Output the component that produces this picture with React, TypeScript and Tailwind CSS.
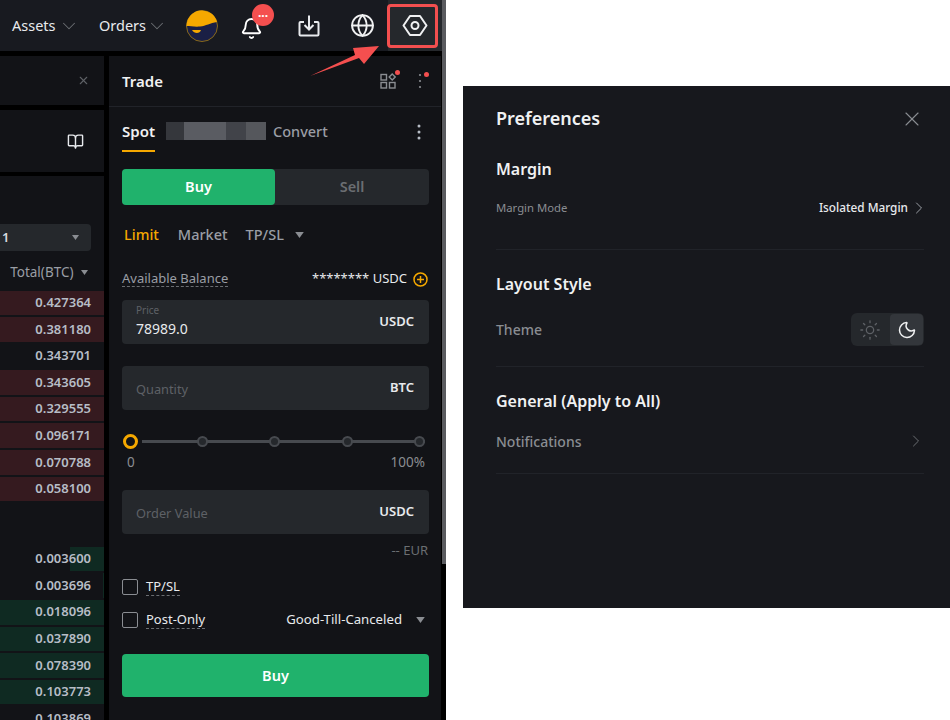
import { Bell, ChevronDown, ChevronRight, Globe, Moon, Sun, X, BookOpen } from 'lucide-react';

const asks: [string, boolean][] = [
  ['0.427364', true], ['0.381180', true], ['0.343701', false], ['0.343605', true],
  ['0.329555', true], ['0.096171', true], ['0.070788', true], ['0.058100', true],
];

const bids: [string, number][] = [
  ['0.003600', 34], ['0.003696', 1], ['0.018096', 104], ['0.037890', 104],
  ['0.078390', 104], ['0.103773', 104], ['0.103869', 0],
];

const font = { fontFamily: '"Noto Sans", "Liberation Sans", sans-serif' };

function Caret({ className = '' }: { className?: string }) {
  return (
    <svg viewBox="0 0 10 7" className={className}>
      <path d="M0 0h10L5 7z" fill="currentColor" />
    </svg>
  );
}

function Kebab({ r = 1.5 }: { r?: number }) {
  return (
    <svg width="6" height="16" viewBox="0 0 6 16" fill="currentColor">
      <circle cx="3" cy="2" r={r} />
      <circle cx="3" cy="8" r={r} />
      <circle cx="3" cy="14" r={r} />
    </svg>
  );
}

function Field({ label, unit }: { label: string; unit: string }) {
  return (
    <div className="flex h-[44px] w-[307px] items-center justify-between rounded bg-[#25282c] pl-[14px] pr-[15px]">
      <span className="pt-[3px] text-[12.8px] text-[#5e6166]">{label}</span>
      <span className="text-[13px] font-semibold text-[#e8eaed]">{unit}</span>
    </div>
  );
}

function SliderDot() {
  return <span className="h-[11px] w-[11px] rounded-full border-2 border-[#474a4f] bg-[#25282c]" />;
}

function TopBar() {
  return (
    <div className="relative flex h-[51px] items-center bg-[#181a20] pl-[12px] text-[14.5px] text-[#e8eaed]">
      <span className="w-[46px]">Assets</span>
      <ChevronDown size={22} strokeWidth={1.1} className="text-[#6b6e72]" />
      <span className="ml-[19px] w-[47px]">Orders</span>
      <ChevronDown size={22} strokeWidth={1.1} className="text-[#6b6e72]" />
      {/* avatar */}
      <svg width="32" height="32" viewBox="0 0 32 32" className="ml-[18px] shrink-0">
        <circle cx="16" cy="16" r="15.5" fill="#1a1f45" stroke="#8a6a1a" />
        <path d="M.5 16A15.500 15.500 0 0 1 31 12C24 13 20 16 14 16.500 9 17 4 16 .5 16z" fill="#f5a800" />
        <path d="M6 20h9c-1 4-7 4-9 0z" fill="#f5a800" />
      </svg>
      <Bell size={23} strokeWidth={2} className="ml-[22px] mt-[5px] text-white" />
      <svg width="24" height="24" viewBox="0 0 24 24" fill="none" stroke="#e8eaed" strokeWidth="2" className="ml-[34px]">
        <path d="M7 8H3.500a1 1 0 0 0-1 1v11.500a1 1 0 0 0 1 1h17a1 1 0 0 0 1-1V9a1 1 0 0 0-1-1H17" />
        <path d="M12 1.500V15M7.500 11l4.500 4.500 4.500-4.500" />
      </svg>
      <Globe size={25} strokeWidth={1.8} className="ml-[29px] text-[#f0f1f2]" />
      {/* selected settings button */}
      <div className="ml-[13px] flex h-[51px] w-[54px] shrink-0 items-center justify-center bg-[#25282c]">
        <svg width="26" height="21" viewBox="0 0 26 21" fill="none" stroke="#f0f1f2" strokeWidth="2">
          <path d="M8 1h10l6.500 9.500L18 20H8L1.500 10.500z" strokeLinejoin="round" />
          <circle cx="13" cy="10.500" r="3.500" />
        </svg>
      </div>
      <span className="absolute left-[252px] top-[4px] flex h-[22px] w-[22px] items-center justify-center rounded-full bg-[#f44f4f] text-[12px] font-bold leading-none text-white">
        <span className="mb-[5px]">...</span>
      </span>
    </div>
  );
}

function OrderBook() {
  return (
    <div className="flex w-[104px] flex-col">
      <div className="flex h-[49px] items-center justify-end bg-[#121317] pr-[14px]">
        <X size={13} className="text-[#5e6166]" />
      </div>
      <div className="mt-[5px] flex h-[62px] items-center justify-end bg-[#121317] pr-[20px]">
        <BookOpen size={17} strokeWidth={2} className="text-[#e8eaed]" />
      </div>
      <div className="mt-[4px] h-[544px] overflow-hidden bg-[#121317] text-[13px] font-semibold text-[#b7bdc6]">
        <div className="mt-[48px] flex h-[27px] w-[91px] items-center justify-between rounded-r bg-[#25282c] pl-[2px] pr-[12.5px]">
          <span className="text-[13px] text-[#d8dade]">1</span>
          <Caret className="h-[5px] w-[7px] text-[#8a8d92]" />
        </div>
        <div className="mt-[12px] flex h-[18px] items-center justify-end pr-[16.5px] text-[13.5px] font-normal text-[#9a9ea5]">
          Total(BTC)
          <Caret className="ml-[7px] h-[5px] w-[7px] text-[#8a8d92]" />
        </div>
        <div className="mt-[9.5px] flex flex-col gap-[2px]">
          {asks.map(([v, bar]) => (
            <div key={v} className={`flex h-[24.6px] items-center justify-end pr-[13px] ${bar ? 'bg-[#351a1f]' : ''}`}>
              {v}
            </div>
          ))}
        </div>
        <div className="mt-[45.5px] flex flex-col gap-[2px]">
          {bids.map(([v, w]) => (
            <div key={v} className="relative flex h-[24.6px] items-center justify-end pr-[13px]">
              <span className="absolute bottom-0 right-0 top-0 bg-[#0f2a22]" style={{ width: w }} />
              <span className="relative">{v}</span>
            </div>
          ))}
        </div>
      </div>
    </div>
  );
}

function TradePanel() {
  return (
    <div className="ml-[5px] flex h-[664px] w-[332px] flex-col bg-[#121317] pl-[13px]">
      <div className="relative -ml-[13px] flex h-[51px] items-center justify-between border-b border-[#212329] pl-[13px] pr-[18px]">
        <span className="text-[15px] font-semibold text-[#f0f1f2]">Trade</span>
        <div className="flex items-center gap-[21px] text-[#8a8d92]">
          <svg width="16" height="16" viewBox="0 0 16 16" fill="none" stroke="currentColor" strokeWidth="1.400">
            <rect x="1" y="1.500" width="5.500" height="5.500" />
            <rect x="1" y="9.500" width="5.500" height="5.500" />
            <rect x="9.500" y="9.500" width="5.500" height="5.500" />
            <path d="M12.200 1l3 3-3 3-3-3z" />
          </svg>
          <Kebab r={1.1} />
        </div>
        <span className="absolute left-[285.5px] top-[13.5px] h-[5px] w-[5px] rounded-full bg-[#f44f4f]" />
        <span className="absolute left-[314.5px] top-[15.5px] h-[5px] w-[5px] rounded-full bg-[#f44f4f]" />
      </div>

      <div className="flex h-[43px] w-[307px] items-start justify-between pt-[14px]">
        <div className="flex items-start">
          <span className="flex h-[31px] w-[33px] items-start border-b-2 border-[#f5a800] text-[15px] font-semibold leading-[20px] text-[#f0f1f2]">Spot</span>
          <div className="ml-[11px] mt-[1px] flex h-[18px] w-[100px]">
            <span className="w-[18px] bg-[#35373c]" />
            <span className="w-[42px] bg-[#5a5c62]" />
            <span className="w-[20px] bg-[#414349]" />
            <span className="w-[20px] bg-[#55575c]" />
          </div>
          <span className="ml-[7px] text-[14.5px] font-medium leading-[20px] text-[#9a9ea5]">Convert</span>
        </div>
        <span className="mr-[7px] mt-[3px] text-[#b7bdc6]"><Kebab r={1.5} /></span>
      </div>

      <div className="mt-[19px] flex h-[36px] w-[307px] rounded bg-[#25282c] text-[14.5px] font-semibold">
        <span className="flex w-[153px] items-center justify-center rounded bg-[#20b26c] text-white">Buy</span>
        <span className="flex flex-1 items-center justify-center text-[#6b6e72]">Sell</span>
      </div>

      <div className="ml-[2px] mt-[19px] flex h-[22px] items-center text-[14.5px] font-medium text-[#9a9ea5]">
        <span className="text-[#f5a800]">Limit</span>
        <span className="ml-[19px]">Market</span>
        <span className="ml-[18px]">TP/SL</span>
        <Caret className="ml-[11px] h-[6px] w-[9px] text-[#8a8d92]" />
      </div>

      <div className="mt-[22px] flex h-[22px] w-[306px] items-center justify-between text-[13px]">
        <span className="border-b border-dashed border-[#6b6e72] leading-[15px] text-[#9a9ea5]">Available Balance</span>
        <span className="flex items-center text-[#e8eaed]">
          ******** USDC
          <svg width="15" height="15" viewBox="0 0 15 15" fill="none" stroke="#f5a800" strokeWidth="1.500" className="ml-[6px]">
            <circle cx="7.500" cy="7.500" r="6.500" />
            <path d="M7.500 4v7M4 7.500h7" />
          </svg>
        </span>
      </div>

      <div className="mt-[10px] flex h-[44px] w-[307px] items-center justify-between rounded bg-[#25282c] pl-[14px] pr-[15px]">
        <div className="-mt-[2px] flex flex-col">
          <span className="mb-[3px] text-[10px] leading-[12px] text-[#5e6166]">Price</span>
          <span className="text-[14px] leading-[20px] text-[#e8eaed]">78989.0</span>
        </div>
        <span className="text-[13px] font-semibold text-[#e8eaed]">USDC</span>
      </div>

      <div className="mt-[22px]"><Field label="Quantity" unit="BTC" /></div>

      <div className="ml-[1px] mt-[24px] flex h-[14px] w-[302px] items-center">
        <span className="h-[15px] w-[15px] shrink-0 rounded-full border-[3px] border-[#f5a800] bg-[#121317]" />
        <div className="relative ml-[4px] flex h-[3px] flex-1 items-center justify-between bg-[#474a4f] pl-[54.5px]">
          <SliderDot />
          <SliderDot />
          <SliderDot />
          <SliderDot />
        </div>
      </div>
      <div className="mt-[6px] flex h-[16px] w-[303px] items-center justify-between pl-[5px] text-[13.5px] text-[#8a8d92]">
        <span>0</span>
        <span>100%</span>
      </div>

      <div className="mt-[20px]"><Field label="Order Value" unit="USDC" /></div>

      <div className="mt-[8px] h-[16px] w-[306px] text-right text-[13px] leading-[16px] text-[#6b6e72]">-- EUR</div>

      <div className="mt-[18px] flex h-[22px] items-center text-[13px] text-[#e8eaed]">
        <span className="h-[16px] w-[16px] rounded-[2px] border border-[#8a8d92]" />
        <span className="ml-[8px] border-b border-dashed border-[#6b6e72] leading-[17px]">TP/SL</span>
      </div>

      <div className="mt-[11px] flex h-[22px] w-[303px] items-center text-[13px] text-[#e8eaed]">
        <span className="h-[16px] w-[16px] rounded-[2px] border border-[#8a8d92]" />
        <span className="ml-[8px] border-b border-dashed border-[#6b6e72] leading-[17px]">Post-Only</span>
        <span className="ml-auto text-[13.2px]">Good-Till-Canceled</span>
        <Caret className="ml-[14px] h-[6px] w-[9px] text-[#8a8d92]" />
      </div>

      <button className="mt-[23px] h-[43px] w-[307px] rounded bg-[#20b26c] text-[14.5px] font-semibold text-white">Buy</button>
    </div>
  );
}

function Arrow() {
  return (
    <svg width="80" height="44" viewBox="0 0 80 44" className="absolute left-[305px] top-[40px]">
      <path d="M5 36L50 15l-2-7 26-2-15 18-5-6z" fill="#f44f4f" />
    </svg>
  );
}

function Preferences() {
  return (
    <div className="ml-[17px] mt-[86px] h-[522px] w-[487px] bg-[#17181d] pl-[33px] pr-[26px]">
      <div className="flex h-[64px] items-center justify-between">
        <span className="text-[18px] font-semibold text-[#f0f1f2]">Preferences</span>
        <X size={24} strokeWidth={1.1} className="mt-[2px] text-[#8a8d92]" />
      </div>
      <div className="mt-[7px] h-[24px] text-[16px] font-semibold leading-[24px] text-[#f0f1f2]">Margin</div>
      <div className="mt-[17px] flex h-[20px] items-center justify-between">
        <span className="text-[11.3px] text-[#8a8d92]">Margin Mode</span>
        <span className="flex items-center text-[11.8px] font-medium text-[#e8eaed]">
          Isolated Margin
          <ChevronRight size={20} strokeWidth={1.2} className="-mr-[5px] ml-[1px] text-[#9a9ea5]" />
        </span>
      </div>
      <div className="mt-[31px] border-t border-[#212329]" />
      <div className="mt-[22px] h-[24px] text-[16px] font-semibold leading-[24px] text-[#f0f1f2]">Layout Style</div>
      <div className="mt-[17px] flex h-[33px] items-center justify-between">
        <span className="text-[14px] font-medium text-[#8a8d92]">Theme</span>
        <div className="flex h-[33px] w-[73px] rounded-md bg-[#25282c] p-[1px]">
          <span className="flex flex-1 items-center justify-center pr-[2px] text-[#5e6166]">
            <Sun size={22} strokeWidth={1.4} />
          </span>
          <span className="flex w-[33px] items-center justify-center rounded bg-[#33363b] text-[#f0f1f2]">
            <Moon size={20} strokeWidth={1.8} />
          </span>
        </div>
      </div>
      <div className="mt-[20px] border-t border-[#212329]" />
      <div className="mt-[22px] h-[24px] text-[16px] font-semibold leading-[24px] text-[#f0f1f2]">General (Apply to All)</div>
      <div className="mt-[18px] flex h-[20px] items-center justify-between">
        <span className="text-[14px] font-medium text-[#8a8d92]">Notifications</span>
        <ChevronRight size={20} strokeWidth={1.2} className="-mr-[2px] text-[#6b6e72]" />
      </div>
      <div className="mt-[22px] border-t border-[#212329]" />
    </div>
  );
}

export default function App() {
  return (
    <div className="flex h-[720px] w-[950px] overflow-hidden bg-white" style={font}>
      <div className="relative flex h-[720px] w-[446px] shrink-0 flex-col overflow-hidden bg-black">
        <TopBar />
        <div className="mt-[5px] flex">
          <OrderBook />
          <TradePanel />
          <div className="ml-[1px] h-[564px] w-[4px] -translate-y-[56px] bg-[#5a5b5f]" />
        </div>
        {/* annotation over the screenshot */}
        <div className="absolute left-[387px] top-[4px] h-[44px] w-[51px] rounded-[4px] border-[3px] border-[#f44f4f]" />
        <Arrow />
      </div>
      <Preferences />
    </div>
  );
}
